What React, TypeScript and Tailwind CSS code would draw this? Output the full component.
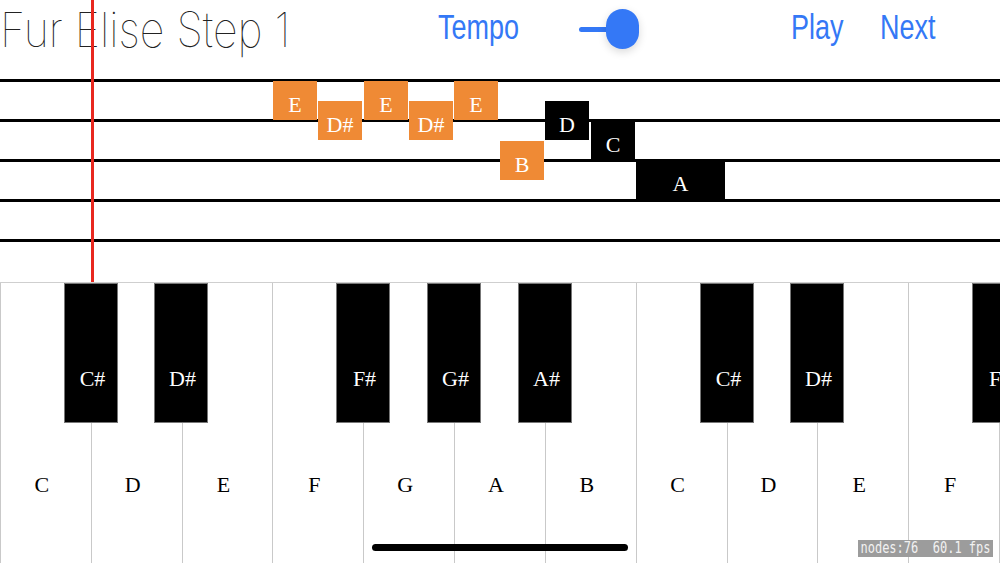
import React from 'react';

const whiteKeys = ['C', 'D', 'E', 'F', 'G', 'A', 'B', 'C', 'D', 'E', 'F'];

const blackKeys = [
  { label: 'C#', left: 'left-[64px]' },
  { label: 'D#', left: 'left-[154px]' },
  { label: 'F#', left: 'left-[336px]' },
  { label: 'G#', left: 'left-[427px]' },
  { label: 'A#', left: 'left-[518px]' },
  { label: 'C#', left: 'left-[700px]' },
  { label: 'D#', left: 'left-[790px]' },
  { label: 'F#', left: 'left-[972px]' },
];

// notes on the staff: place = column on the timeline, row = pitch
const notes = [
  { label: 'E', pos: 'left-[273px] top-[2px] w-[44px]', played: true },
  { label: 'D#', pos: 'left-[318px] top-[22px] w-[44px]', played: true },
  { label: 'E', pos: 'left-[364px] top-[2px] w-[44px]', played: true },
  { label: 'D#', pos: 'left-[409px] top-[22px] w-[44px]', played: true },
  { label: 'E', pos: 'left-[454px] top-[2px] w-[44px]', played: true },
  { label: 'B', pos: 'left-[500px] top-[62px] w-[44px]', played: true },
  { label: 'D', pos: 'left-[545px] top-[22px] w-[44px]', played: false },
  { label: 'C', pos: 'left-[591px] top-[42px] w-[44px]', played: false },
  { label: 'A', pos: 'left-[636px] top-[81px] w-[89px]', played: false },
];

const serif = "font-['Liberation_Serif',serif]";

export default function App() {
  return (
    <div className="relative w-[1000px] h-[563px] overflow-hidden bg-white flex flex-col">
      {/* Header */}
      <header className="h-[79px] pb-[20px] flex items-center shrink-0 font-['Liberation_Sans',sans-serif]">
        <div className="w-[438px] shrink-0">
          <span className="inline-block text-[43px] leading-none font-thin text-[#222] font-['Inter',sans-serif] scale-y-[1.12] whitespace-nowrap">
            Fur Elise Step 1
          </span>
        </div>
        <div className="w-[141px] shrink-0">
          <span className="inline-block text-[27px] leading-none text-[#3478f6] scale-y-[1.28]">Tempo</span>
        </div>
        <div className="w-[212px] shrink-0 flex items-center">
          <div className="relative w-[60px] h-[40px] flex items-center">
            <div className="w-[40px] h-[5px] rounded-full bg-[#3478f6]" />
            <div className="absolute left-[27px] top-[-1px] w-[33px] h-[40px] rounded-full bg-[#3478f6] shadow-[0_3px_8px_rgba(0,0,0,0.15)]" />
          </div>
        </div>
        <div className="w-[89px] shrink-0">
          <span className="inline-block text-[27px] leading-none text-[#3478f6] scale-y-[1.28]">Play</span>
        </div>
        <div>
          <span className="inline-block text-[27px] leading-none text-[#3478f6] scale-y-[1.28]">Next</span>
        </div>
      </header>

      {/* Staff */}
      <div className="relative h-[203px] shrink-0 flex flex-col gap-[37px]">
        {[0, 1, 2, 3, 4].map((i) => (
          <div key={i} className="h-[3px] bg-black" />
        ))}
        {notes.map((n, i) => (
          <div
            key={i}
            className={`absolute ${n.pos} h-[39px] pt-[8px] flex items-center justify-center text-white text-[22px] ${serif} ${
              n.played ? 'bg-[#ef8a35]' : 'bg-black'
            }`}
          >
            {n.label}
          </div>
        ))}
      </div>

      {/* Keyboard */}
      <div className="relative flex-1 flex border-t border-[#cfcfcf]">
        {whiteKeys.map((k, i) => (
          <div
            key={i}
            className={`flex-1 flex flex-col items-center pt-[188px] pr-[8px] border-r border-[#c9c9c9] ${i === 0 ? 'border-l' : ''} ${serif} text-[22px] leading-[28px] text-black`}
          >
            {k}
          </div>
        ))}
        {blackKeys.map((k, i) => (
          <div
            key={i}
            className={`absolute top-0 ${k.left} w-[54px] h-[140px] bg-black border border-[#777] flex flex-col items-center pt-[82px] pl-[3px] ${serif} text-[22px] leading-[26px] text-white`}
          >
            {k.label}
          </div>
        ))}
      </div>

      {/* Playhead */}
      <div className="absolute left-[91px] top-0 w-[3px] h-[282px] bg-[#e8281f]" />

      {/* Home indicator */}
      <div className="absolute left-[372px] top-[544px] w-[256px] h-[7px] rounded-full bg-black" />

      {/* Debug stats */}
      <div className="absolute left-[858px] top-[540px] w-[135px] h-[17px] bg-[#9c9c9c] text-[#f2f2f2] text-[12px] leading-[17px] font-['DejaVu_Sans_Mono',monospace] whitespace-pre text-center">
        <span className="inline-block scale-y-[1.25]">nodes:76  60.1 fps</span>
      </div>
    </div>
  );
}
